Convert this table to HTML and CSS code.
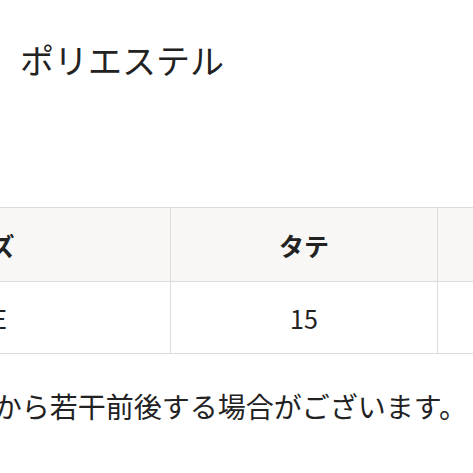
FILE: index.html
```html
<!DOCTYPE html>
<html lang="ja">
<head>
<meta charset="utf-8">
<link rel="stylesheet" href="styles.css">
</head>
<body>
<div class="page">
  <p class="material">ポリエステル</p>
  <table class="size-table">
    <thead>
      <tr><th>サイズ</th><th>タテ</th><th>ヨコ</th></tr>
    </thead>
    <tbody>
      <tr><td>FREE</td><td>15</td><td>15</td></tr>
    </tbody>
  </table>
  <div class="note"><span>手作業での採寸のため、表記サイズから若干前後する場合がございます。</span></div>
</div>
</body>
</html>
```
FILE: styles.css
```css
html, body {
  margin: 0;
  padding: 0;
  background: #ffffff;
  overflow: hidden;
}
body {
  font-family: "Noto Sans CJK JP", "Noto Sans", sans-serif;
  color: #222222;
}
.page {
  width: 473px;
  height: 473px;
  overflow: hidden;
  padding-top: 38px;
  box-sizing: border-box;
}
.material {
  margin: 0 0 0 20px;
  font-size: 34px;
  line-height: 44px;
}
.size-table {
  width: 918px;
  min-width: 918px;
  margin: 125px 0 0 -216px;
  border-collapse: collapse;
  table-layout: fixed;
  font-size: 25px;
}
.size-table th,
.size-table td {
  border: 1px solid #dcdcdc;
  text-align: center;
  padding: 0;
}
.size-table th {
  background: #f8f7f5;
  font-weight: 700;
  height: 73px;
}
.size-table td {
  height: 71px;
}
.size-table th:nth-child(1) { width: 385px; }
.size-table th:nth-child(2) { width: 266px; }
.size-table th:nth-child(3) { width: 266px; }
.note {
  display: flex;
  justify-content: flex-end;
  width: 467px;
  margin-top: 32px;
  font-size: 28px;
  line-height: 40px;
  white-space: nowrap;
}
```
